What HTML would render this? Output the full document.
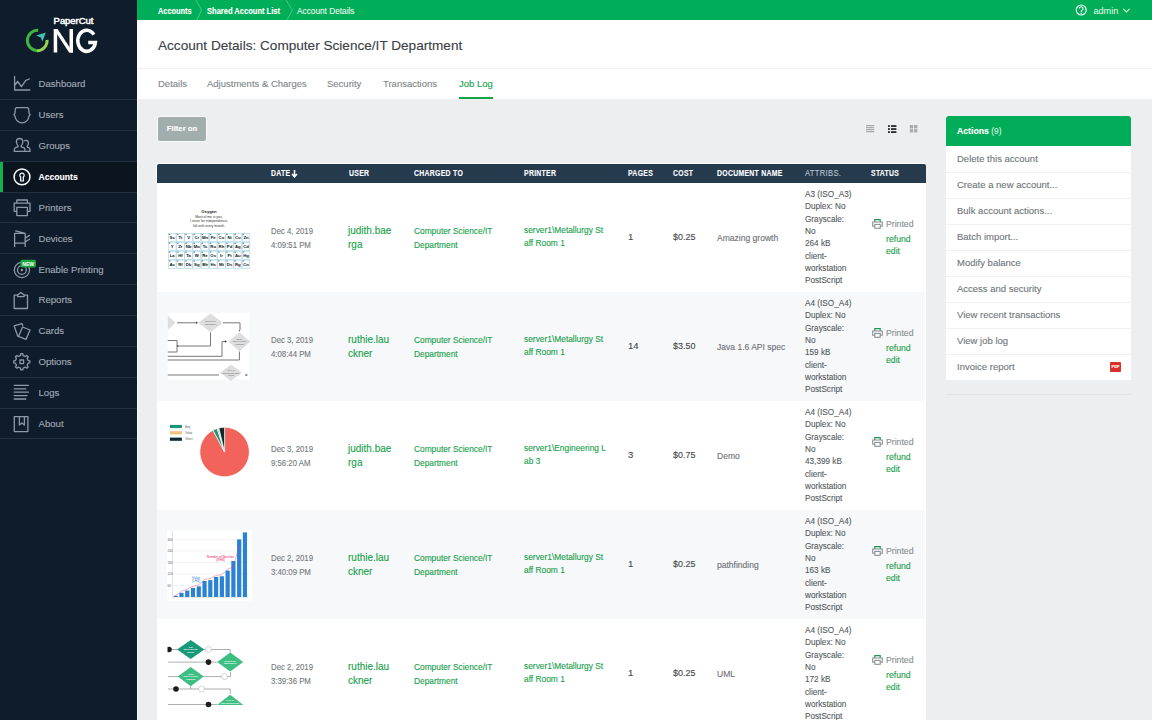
<!DOCTYPE html>
<html><head><meta charset="utf-8">
<style>
*{box-sizing:border-box;margin:0;padding:0}
html,body{width:1152px;height:720px;overflow:hidden}
body{position:relative;background:#eceef0;font-family:"Liberation Sans",sans-serif;color:#555;-webkit-text-stroke:0.12px currentColor}
#side{position:absolute;left:0;top:0;width:137px;height:720px;background:#0f1c2b}
#sedge{position:absolute;left:137px;top:0;width:1px;height:720px;background:#fafbfc}
.nt{position:absolute;left:38.5px;font-size:9.6px;color:#a1abb6;white-space:nowrap;line-height:12px}
.nt.act{color:#fff;font-weight:bold;font-size:8.6px}
.dv{position:absolute;left:0;width:137px;height:1px;background:#253040}
#actbg{position:absolute;left:0;top:162px;width:137px;height:30px;background:#0b1520}
#actbar{position:absolute;left:0;top:162px;width:3px;height:30px;background:#17b04f}
#side svg{position:absolute;overflow:visible}
#top{position:absolute;left:137px;top:0;width:1015px;height:20px;background:#00ad59}
.bc{position:absolute;top:5.9px;line-height:11px;font-size:8.4px;color:#fff;white-space:nowrap;transform:scaleX(0.88);transform-origin:0 0}
#hdr{position:absolute;left:137px;top:20px;width:1015px;height:79px;background:#fff}
#title{position:absolute;left:21px;top:17px;font-size:13.6px;color:#3b4146;white-space:nowrap;line-height:18px}
#hline{position:absolute;left:0;top:48px;width:1015px;height:1px;background:#eef0f1}
.tab{position:absolute;top:56px;font-size:9.5px;color:#80878b;white-space:nowrap;line-height:16px}
.tab.on{color:#16a34a}
#uline{position:absolute;left:322px;top:77px;width:34px;height:2px;background:#17a348}
#filter{position:absolute;left:157px;top:116px;width:50px;height:26px;border:1px solid #f7f9fa;border-radius:3px;background:#a2adad;color:#fff;font-size:7.7px;font-weight:bold;line-height:24px;text-align:center}
#tblbg{position:absolute;left:156px;top:163px;width:770px;height:21px;background:#fff;border-radius:3px}
#tbl{position:absolute;left:157px;top:164px;width:769px;height:600px;background:#fff}
#th{position:absolute;left:0;top:0;width:769px;height:19px;background:#263a4e;border-radius:2px 2px 0 0}
.h{position:absolute;top:0.4px;line-height:19px;font-size:8.2px;font-weight:bold;color:#fff;white-space:nowrap;letter-spacing:0.35px;transform:scaleX(0.84);transform-origin:0 0}
.row{position:absolute;left:0;width:768px;height:109px}
.row.alt{background:#f7f8fa}
.thumb{position:absolute;left:0;top:0;width:113px;height:109px}
.c{position:absolute;white-space:nowrap}
.date{font-size:8.5px;color:#74797d;line-height:14.1px;transform:scaleX(0.917);transform-origin:0 0}
.user{font-size:10px;color:#18a14b;line-height:14.5px}
.chg{font-size:8.35px;color:#18a14b;line-height:14px}
.prn{font-size:8.4px;color:#18a14b;line-height:12.8px}
.pg{font-size:9.5px;color:#43484c;line-height:12px}
.cost{font-size:9.5px;color:#43484c;line-height:12px;transform:scaleX(0.94);transform-origin:0 0}
.doc{font-size:8.8px;color:#6c7175;line-height:12px;transform:scaleX(0.97);transform-origin:0 0}
.att{font-size:9px;color:#555b60;line-height:12.3px;transform:scaleX(0.91);transform-origin:0 0}
.st{font-size:8.7px;line-height:12px}
.st.p{color:#888e92}
.st.l{color:#1a9f4c}
.pi{position:absolute}
#act{position:absolute;left:946px;top:116px;width:185px;height:264px;background:#fff;border-radius:3px 3px 0 0}
#acth{position:absolute;left:0;top:0;width:185px;height:30px;background:#01ad59;border-radius:3px 3px 0 0}
#acth .t{position:absolute;left:11px;top:9px;font-size:8.7px;font-weight:bold;color:#fff;line-height:12px;white-space:nowrap}
#acth .t span{font-weight:normal;color:#d8f3e0;font-size:8.3px}
.ai{position:absolute;left:11px;font-size:9.5px;color:#6f767b;white-space:nowrap;line-height:26px}
.ad{position:absolute;left:0;width:185px;height:1px;background:#f0f1f3}
.pdf{position:absolute;left:164px;top:246px;width:11px;height:10px;background:#d9302c;border-radius:1px;color:#fff;font-size:4px;font-weight:bold;line-height:10px;text-align:center}
#actfoot{position:absolute;left:946px;top:394px;width:185px;height:1px;background:#e2e4e6}

</style></head><body>
<div id="sedge"></div>
<div id="side">
<div id="actbg"></div><div id="actbar"></div><div class="dv" style="top:99px"></div><div class="dv" style="top:130px"></div><div class="dv" style="top:161px"></div><div class="dv" style="top:192px"></div><div class="dv" style="top:222px"></div><div class="dv" style="top:253px"></div><div class="dv" style="top:284px"></div><div class="dv" style="top:315px"></div><div class="dv" style="top:346px"></div><div class="dv" style="top:377px"></div><div class="dv" style="top:408px"></div><div class="dv" style="top:438px"></div>
<div class="nt" style="top:78.47px">Dashboard</div>
<div class="nt" style="top:109.32px">Users</div>
<div class="nt" style="top:140.17px">Groups</div>
<div class="nt act" style="top:171.37px">Accounts</div>
<div class="nt" style="top:201.87px">Printers</div>
<div class="nt" style="top:232.72px">Devices</div>
<div class="nt" style="top:263.57px">Enable Printing</div>
<div class="nt" style="top:294.42px">Reports</div>
<div class="nt" style="top:325.27px">Cards</div>
<div class="nt" style="top:356.12px">Options</div>
<div class="nt" style="top:386.97px">Logs</div>
<div class="nt" style="top:417.82px">About</div>












<svg width="137" height="720" style="left:0;top:0" viewBox="0 0 137 720">
<g fill="none" stroke="#8e99a5" stroke-width="1.3" stroke-linecap="round" stroke-linejoin="round">
 <!-- dashboard -->
 <path d="M14.6 76.5V90h15.2M14.6 85.5l3-4 3.8 5.2 4.4-6.4 3.6-1.3"/>
 <!-- users -->
 <path d="M16.3 107.7H27.7Q28.8 108.2 28.9 111L29.1 113.4 30.2 114.7 29 116.1Q28 122.4 22 122.8 16 122.4 15 116.1L13.8 114.7 14.9 113.4 15.1 111Q15.2 108.2 16.3 107.7Z"/>
 <!-- groups -->
 <path d="M14.3 151.4V149.6Q14.3 148 16.2 147.4L18 146.8V145.8Q16.4 144.6 16.4 141.8 16.4 138.5 19.6 138.5 22.8 138.5 22.8 141.8 22.8 144.6 21.2 145.8V146.8L23 147.4Q24.9 148 24.9 149.6V151.4Z"/>
 <path d="M24.3 140.8Q25 140.3 25.9 140.3 28.4 140.3 28.4 143 28.4 145.2 27.2 146.2V147L28.6 147.6Q30 148.2 30 149.6V151.4H25.6"/>
 <!-- printers -->
 <path d="M16.8 203.2v-3.2h10.6v3.2M16.8 211.3h-2.6v-8.1h15.8v8.1h-2.6M16.8 207.4h10.6v8.2h-10.6z"/>
 <!-- devices -->
 <path d="M15.6 230.8l9.6 2.6M14.6 233.4h10.6v9.8h-10.6zM14.6 243.2v3.2M25.2 243.2v3.2M25.4 238l4-2.6M25.4 241.8l4-2.6"/>
 <!-- enable printing -->
 <circle cx="21.9" cy="270" r="7.6"/><circle cx="21.9" cy="270" r="4.4"/>
 <!-- reports -->
 <path d="M17.6 295.2h-3.4v13.3h13.3v-13.3h-3.4M17.6 296.6h6.5v-1.6l-3.25-2.6-3.25 2.6z"/>
 <!-- cards -->
 <path d="M14.1 325.8l7.7-2.1 1 1.6M17.8 336.4l-3.7-10.6M18.4 336.4l4.2-9.4 7.4 3-4 9.4z"/>
 <!-- options -->
 <path d="M20.47 355.54 L20.83 353.76 L22.77 353.76 L23.13 355.54 L25.28 356.43 L26.80 355.43 L28.17 356.80 L27.17 358.32 L28.06 360.47 L29.84 360.83 L29.84 362.77 L28.06 363.13 L27.17 365.28 L28.17 366.80 L26.80 368.17 L25.28 367.17 L23.13 368.06 L22.77 369.84 L20.83 369.84 L20.47 368.06 L18.32 367.17 L16.80 368.17 L15.43 366.80 L16.43 365.28 L15.54 363.13 L13.76 362.77 L13.76 360.83 L15.54 360.47 L16.43 358.32 L15.43 356.80 L16.80 355.43 L18.32 356.43z"/>
 <rect x="20" y="360" width="3.6" height="3.6"/>
 <!-- logs -->
 <path d="M14.2 385.3h14.2M14.2 388.8h11.6M14.2 392.2h14.2M14.2 395.6h12.8M14.2 399h11.6"/>
 <!-- about -->
 <path d="M14.3 416.6h13.6v15h-13.6zM19.4 416.6v8.4l2.5-2 2.5 2v-8.4"/>
</g>
<g fill="none" stroke="#ffffff" stroke-width="1.5">
 <circle cx="22" cy="176.9" r="7.9"/>
</g>
<path d="M22 173.1a2.2 2.2 0 0 1 1.3 4v3.9h-2.6v-3.9a2.2 2.2 0 0 1 1.3-4z" fill="none" stroke="#fff" stroke-width="1.2"/>
<circle cx="21.9" cy="270" r="1.2" fill="#8e99a5"/>
<rect x="20.4" y="259.8" width="15.6" height="7.6" rx="1.6" fill="#1aa63a"/>
<text x="28.2" y="265.9" font-family="Liberation Sans" font-weight="bold" font-size="6" fill="#fff" text-anchor="middle" textLength="12" lengthAdjust="spacingAndGlyphs">NEW</text>
<!-- logo -->
<text x="53.6" y="24.4" font-family="Liberation Sans" font-size="8.4" stroke="#fff" stroke-width="0.45" style="-webkit-text-stroke:0" fill="#fff" textLength="39.8" lengthAdjust="spacingAndGlyphs">PaperCut</text>
<g fill="#fff"><rect x="53.7" y="29" width="3.5" height="23.5"/><rect x="69.5" y="29" width="3.5" height="23.5"/><path d="M53.7 29H57.6L73 52.5H69.1Z"/></g><path d="M93.85 34.6A8.85 10.55 0 1 0 95.4 42.4H88.2" fill="none" stroke="#fff" stroke-width="3.5"/>
<path d="M38.2 30.3A10.2 10.2 0 0 0 37 50.7" fill="none" stroke="#3fb53f" stroke-width="3"/>
<path d="M37 50.7A10.2 10.2 0 0 0 47.1 39.8" fill="none" stroke="#93d452" stroke-width="3"/>
<path d="M36.2 35.6L45.8 32.4 42.4 41.6 40.8 37.6z" fill="#3cc6b5"/>
</svg>
</div>
<div id="top">
  <div class="bc" style="left:20.6px;font-weight:bold">Accounts</div>
  <div class="bc" style="left:70.3px;font-weight:bold;transform:scaleX(0.9)">Shared Account List</div>
  <div class="bc" style="left:160px;font-size:8.8px;top:5.5px;color:#e3f6ea;transform:scaleX(0.94)">Account Details</div>
  <svg width="1015" height="20" style="position:absolute;left:0;top:0" viewBox="137 0 1015 20">
    <g fill="none" stroke="#5fcf8c" stroke-width="0.8"><path d="M195.8 0L201.6 10 196.8 20"/><path d="M286 0L292.3 10 287.1 20"/></g>
    <circle cx="1081.2" cy="10" r="5" fill="none" stroke="#eafbef" stroke-width="1.2"/>
    <path d="M1079.3 8.6a1.9 1.9 0 1 1 2.8 1.7q-.9.5-.9 1.4v.5" fill="none" stroke="#eafbef" stroke-width="1.1"/>
    <circle cx="1081.2" cy="13.4" r="0.65" fill="#eafbef"/>
    <path d="M1123.2 8.8l3.2 3.2 3.2-3.2" fill="none" stroke="#d5f3de" stroke-width="1.1"/>
  </svg>
  <div class="bc" style="left:956.5px;font-size:9.1px;top:5.5px;color:#d5f5de;transform:none">admin</div>
</div>
<div id="hdr">
  <div id="title">Account Details: Computer Science/IT Department</div>
  <div id="hline"></div>
  <div class="tab" style="left:21px">Details</div>
  <div class="tab" style="left:70px">Adjustments &amp; Charges</div>
  <div class="tab" style="left:190px">Security</div>
  <div class="tab" style="left:246px">Transactions</div>
  <div class="tab on" style="left:322px">Job Log</div>
  <div id="uline"></div>
</div>
<div id="filter">Filter on</div>
<svg width="60" height="12" style="position:absolute;left:862px;top:122px" viewBox="862 122 60 12">
  <g fill="#a9adb1"><rect x="866" y="125" width="8.2" height="1.3"/><rect x="866" y="127" width="8.2" height="1.3"/><rect x="866" y="129" width="8.2" height="1.3"/><rect x="866" y="131" width="8.2" height="1.3"/></g>
  <g fill="#1d1f22"><rect x="888" y="125.2" width="1.9" height="1.7"/><rect x="891" y="125.2" width="5.4" height="1.7"/><rect x="888" y="128.2" width="1.9" height="1.7"/><rect x="891" y="128.2" width="5.4" height="1.7"/><rect x="888" y="131.2" width="1.9" height="1.7"/><rect x="891" y="131.2" width="5.4" height="1.7"/></g>
  <g fill="#a9adb1"><rect x="909.8" y="125" width="3.4" height="3.4"/><rect x="914" y="125" width="3.4" height="3.4"/><rect x="909.8" y="129.1" width="3.4" height="3.4"/><rect x="914" y="129.1" width="3.4" height="3.4"/></g>
</svg>
<div id="tblbg"></div>
<div id="tbl">
  <div id="th">
    <div class="h" style="left:114px">DATE</div><svg style="position:absolute;left:134px;top:5px" width="7" height="9" viewBox="0 0 7 9"><path d="M3.5 1V7.5M1 5l2.5 2.7L6 5" fill="none" stroke="#fff" stroke-width="1.6"/></svg>
    <div class="h" style="left:192px">USER</div>
    <div class="h" style="left:257px">CHARGED TO</div>
    <div class="h" style="left:367px">PRINTER</div>
    <div class="h" style="left:471px">PAGES</div>
    <div class="h" style="left:516px">COST</div>
    <div class="h" style="left:560px">DOCUMENT NAME</div>
    <div class="h" style="left:648px;font-weight:normal;color:#b9c3cd;transform:scaleX(0.93)">ATTRIBS.</div>
    <div class="h" style="left:714px">STATUS</div>
  </div>
<div class="row" style="top:19px">
 <div class="thumb" style="top:0"><svg width="113" height="109" viewBox="157 183 113 109" style="position:absolute;left:0;top:0"><text x="209" y="213" font-family="Liberation Sans" font-weight="bold" font-size="4.2" text-anchor="middle" fill="#222">Oxygen</text><text x="209" y="217.8" font-family="Liberation Sans" font-size="3.4" text-anchor="middle" fill="#333">Most of me is you,</text><text x="209" y="222.3" font-family="Liberation Sans" font-size="3.4" text-anchor="middle" fill="#333">I strive for independence,</text><text x="209" y="226.8" font-family="Liberation Sans" font-size="3.4" text-anchor="middle" fill="#333">fall with every breath.</text><rect x="168.1" y="233.1" width="82.0" height="35.6" fill="#f4fafd"/><rect x="168.40" y="233.40" width="7.60" height="8.30" fill="#fff" stroke="#8fcde6" stroke-width="0.5"/><text x="172.20" y="239.10" font-family="Liberation Sans" font-weight="bold" font-size="4.3" text-anchor="middle" fill="#111">Sc</text><rect x="168.90" y="233.90" width="1.4" height="0.8" fill="#444"/><rect x="176.60" y="233.40" width="7.60" height="8.30" fill="#fff" stroke="#8fcde6" stroke-width="0.5"/><text x="180.40" y="239.10" font-family="Liberation Sans" font-weight="bold" font-size="4.3" text-anchor="middle" fill="#111">Ti</text><rect x="177.10" y="233.90" width="1.4" height="0.8" fill="#444"/><rect x="184.80" y="233.40" width="7.60" height="8.30" fill="#fff" stroke="#8fcde6" stroke-width="0.5"/><text x="188.60" y="239.10" font-family="Liberation Sans" font-weight="bold" font-size="4.3" text-anchor="middle" fill="#111">V</text><rect x="185.30" y="233.90" width="1.4" height="0.8" fill="#444"/><rect x="193.00" y="233.40" width="7.60" height="8.30" fill="#fff" stroke="#8fcde6" stroke-width="0.5"/><text x="196.80" y="239.10" font-family="Liberation Sans" font-weight="bold" font-size="4.3" text-anchor="middle" fill="#111">Cr</text><rect x="193.50" y="233.90" width="1.4" height="0.8" fill="#444"/><rect x="201.20" y="233.40" width="7.60" height="8.30" fill="#fff" stroke="#8fcde6" stroke-width="0.5"/><text x="205.00" y="239.10" font-family="Liberation Sans" font-weight="bold" font-size="4.3" text-anchor="middle" fill="#111">Mn</text><rect x="201.70" y="233.90" width="1.4" height="0.8" fill="#444"/><rect x="209.40" y="233.40" width="7.60" height="8.30" fill="#fff" stroke="#8fcde6" stroke-width="0.5"/><text x="213.20" y="239.10" font-family="Liberation Sans" font-weight="bold" font-size="4.3" text-anchor="middle" fill="#111">Fe</text><rect x="209.90" y="233.90" width="1.4" height="0.8" fill="#444"/><rect x="217.60" y="233.40" width="7.60" height="8.30" fill="#fff" stroke="#8fcde6" stroke-width="0.5"/><text x="221.40" y="239.10" font-family="Liberation Sans" font-weight="bold" font-size="4.3" text-anchor="middle" fill="#111">Co</text><rect x="218.10" y="233.90" width="1.4" height="0.8" fill="#444"/><rect x="225.80" y="233.40" width="7.60" height="8.30" fill="#fff" stroke="#8fcde6" stroke-width="0.5"/><text x="229.60" y="239.10" font-family="Liberation Sans" font-weight="bold" font-size="4.3" text-anchor="middle" fill="#111">Ni</text><rect x="226.30" y="233.90" width="1.4" height="0.8" fill="#444"/><rect x="234.00" y="233.40" width="7.60" height="8.30" fill="#fff" stroke="#8fcde6" stroke-width="0.5"/><text x="237.80" y="239.10" font-family="Liberation Sans" font-weight="bold" font-size="4.3" text-anchor="middle" fill="#111">Cu</text><rect x="234.50" y="233.90" width="1.4" height="0.8" fill="#444"/><rect x="242.20" y="233.40" width="7.60" height="8.30" fill="#fff" stroke="#8fcde6" stroke-width="0.5"/><text x="246.00" y="239.10" font-family="Liberation Sans" font-weight="bold" font-size="4.3" text-anchor="middle" fill="#111">Zn</text><rect x="242.70" y="233.90" width="1.4" height="0.8" fill="#444"/><rect x="168.40" y="242.30" width="7.60" height="8.30" fill="#fff" stroke="#8fcde6" stroke-width="0.5"/><text x="172.20" y="248.00" font-family="Liberation Sans" font-weight="bold" font-size="4.3" text-anchor="middle" fill="#111">Y</text><rect x="168.90" y="242.80" width="1.4" height="0.8" fill="#444"/><rect x="176.60" y="242.30" width="7.60" height="8.30" fill="#fff" stroke="#8fcde6" stroke-width="0.5"/><text x="180.40" y="248.00" font-family="Liberation Sans" font-weight="bold" font-size="4.3" text-anchor="middle" fill="#111">Zr</text><rect x="177.10" y="242.80" width="1.4" height="0.8" fill="#444"/><rect x="184.80" y="242.30" width="7.60" height="8.30" fill="#fff" stroke="#8fcde6" stroke-width="0.5"/><text x="188.60" y="248.00" font-family="Liberation Sans" font-weight="bold" font-size="4.3" text-anchor="middle" fill="#111">Nb</text><rect x="185.30" y="242.80" width="1.4" height="0.8" fill="#444"/><rect x="193.00" y="242.30" width="7.60" height="8.30" fill="#fff" stroke="#8fcde6" stroke-width="0.5"/><text x="196.80" y="248.00" font-family="Liberation Sans" font-weight="bold" font-size="4.3" text-anchor="middle" fill="#111">Mo</text><rect x="193.50" y="242.80" width="1.4" height="0.8" fill="#444"/><rect x="201.20" y="242.30" width="7.60" height="8.30" fill="#fff" stroke="#8fcde6" stroke-width="0.5"/><text x="205.00" y="248.00" font-family="Liberation Sans" font-weight="bold" font-size="4.3" text-anchor="middle" fill="#111">Tc</text><rect x="201.70" y="242.80" width="1.4" height="0.8" fill="#444"/><rect x="209.40" y="242.30" width="7.60" height="8.30" fill="#fff" stroke="#8fcde6" stroke-width="0.5"/><text x="213.20" y="248.00" font-family="Liberation Sans" font-weight="bold" font-size="4.3" text-anchor="middle" fill="#111">Ru</text><rect x="209.90" y="242.80" width="1.4" height="0.8" fill="#444"/><rect x="217.60" y="242.30" width="7.60" height="8.30" fill="#fff" stroke="#8fcde6" stroke-width="0.5"/><text x="221.40" y="248.00" font-family="Liberation Sans" font-weight="bold" font-size="4.3" text-anchor="middle" fill="#111">Rh</text><rect x="218.10" y="242.80" width="1.4" height="0.8" fill="#444"/><rect x="225.80" y="242.30" width="7.60" height="8.30" fill="#fff" stroke="#8fcde6" stroke-width="0.5"/><text x="229.60" y="248.00" font-family="Liberation Sans" font-weight="bold" font-size="4.3" text-anchor="middle" fill="#111">Pd</text><rect x="226.30" y="242.80" width="1.4" height="0.8" fill="#444"/><rect x="234.00" y="242.30" width="7.60" height="8.30" fill="#fff" stroke="#8fcde6" stroke-width="0.5"/><text x="237.80" y="248.00" font-family="Liberation Sans" font-weight="bold" font-size="4.3" text-anchor="middle" fill="#111">Ag</text><rect x="234.50" y="242.80" width="1.4" height="0.8" fill="#444"/><rect x="242.20" y="242.30" width="7.60" height="8.30" fill="#fff" stroke="#8fcde6" stroke-width="0.5"/><text x="246.00" y="248.00" font-family="Liberation Sans" font-weight="bold" font-size="4.3" text-anchor="middle" fill="#111">Cd</text><rect x="242.70" y="242.80" width="1.4" height="0.8" fill="#444"/><rect x="168.40" y="251.20" width="7.60" height="8.30" fill="#fff" stroke="#8fcde6" stroke-width="0.5"/><text x="172.20" y="256.90" font-family="Liberation Sans" font-weight="bold" font-size="4.3" text-anchor="middle" fill="#111">La</text><rect x="168.90" y="251.70" width="1.4" height="0.8" fill="#444"/><rect x="176.60" y="251.20" width="7.60" height="8.30" fill="#fff" stroke="#8fcde6" stroke-width="0.5"/><text x="180.40" y="256.90" font-family="Liberation Sans" font-weight="bold" font-size="4.3" text-anchor="middle" fill="#111">Hf</text><rect x="177.10" y="251.70" width="1.4" height="0.8" fill="#444"/><rect x="184.80" y="251.20" width="7.60" height="8.30" fill="#fff" stroke="#8fcde6" stroke-width="0.5"/><text x="188.60" y="256.90" font-family="Liberation Sans" font-weight="bold" font-size="4.3" text-anchor="middle" fill="#111">Ta</text><rect x="185.30" y="251.70" width="1.4" height="0.8" fill="#444"/><rect x="193.00" y="251.20" width="7.60" height="8.30" fill="#fff" stroke="#8fcde6" stroke-width="0.5"/><text x="196.80" y="256.90" font-family="Liberation Sans" font-weight="bold" font-size="4.3" text-anchor="middle" fill="#111">W</text><rect x="193.50" y="251.70" width="1.4" height="0.8" fill="#444"/><rect x="201.20" y="251.20" width="7.60" height="8.30" fill="#fff" stroke="#8fcde6" stroke-width="0.5"/><text x="205.00" y="256.90" font-family="Liberation Sans" font-weight="bold" font-size="4.3" text-anchor="middle" fill="#111">Re</text><rect x="201.70" y="251.70" width="1.4" height="0.8" fill="#444"/><rect x="209.40" y="251.20" width="7.60" height="8.30" fill="#fff" stroke="#8fcde6" stroke-width="0.5"/><text x="213.20" y="256.90" font-family="Liberation Sans" font-weight="bold" font-size="4.3" text-anchor="middle" fill="#111">Os</text><rect x="209.90" y="251.70" width="1.4" height="0.8" fill="#444"/><rect x="217.60" y="251.20" width="7.60" height="8.30" fill="#fff" stroke="#8fcde6" stroke-width="0.5"/><text x="221.40" y="256.90" font-family="Liberation Sans" font-weight="bold" font-size="4.3" text-anchor="middle" fill="#111">Ir</text><rect x="218.10" y="251.70" width="1.4" height="0.8" fill="#444"/><rect x="225.80" y="251.20" width="7.60" height="8.30" fill="#fff" stroke="#8fcde6" stroke-width="0.5"/><text x="229.60" y="256.90" font-family="Liberation Sans" font-weight="bold" font-size="4.3" text-anchor="middle" fill="#111">Pt</text><rect x="226.30" y="251.70" width="1.4" height="0.8" fill="#444"/><rect x="234.00" y="251.20" width="7.60" height="8.30" fill="#fff" stroke="#8fcde6" stroke-width="0.5"/><text x="237.80" y="256.90" font-family="Liberation Sans" font-weight="bold" font-size="4.3" text-anchor="middle" fill="#111">Au</text><rect x="234.50" y="251.70" width="1.4" height="0.8" fill="#444"/><rect x="242.20" y="251.20" width="7.60" height="8.30" fill="#fff" stroke="#8fcde6" stroke-width="0.5"/><text x="246.00" y="256.90" font-family="Liberation Sans" font-weight="bold" font-size="4.3" text-anchor="middle" fill="#111">Hg</text><rect x="242.70" y="251.70" width="1.4" height="0.8" fill="#444"/><rect x="168.40" y="260.10" width="7.60" height="8.30" fill="#fff" stroke="#8fcde6" stroke-width="0.5"/><text x="172.20" y="265.80" font-family="Liberation Sans" font-weight="bold" font-size="4.3" text-anchor="middle" fill="#111">Ac</text><rect x="168.90" y="260.60" width="1.4" height="0.8" fill="#444"/><rect x="176.60" y="260.10" width="7.60" height="8.30" fill="#fff" stroke="#8fcde6" stroke-width="0.5"/><text x="180.40" y="265.80" font-family="Liberation Sans" font-weight="bold" font-size="4.3" text-anchor="middle" fill="#111">Rf</text><rect x="177.10" y="260.60" width="1.4" height="0.8" fill="#444"/><rect x="184.80" y="260.10" width="7.60" height="8.30" fill="#fff" stroke="#8fcde6" stroke-width="0.5"/><text x="188.60" y="265.80" font-family="Liberation Sans" font-weight="bold" font-size="4.3" text-anchor="middle" fill="#111">Db</text><rect x="185.30" y="260.60" width="1.4" height="0.8" fill="#444"/><rect x="193.00" y="260.10" width="7.60" height="8.30" fill="#fff" stroke="#8fcde6" stroke-width="0.5"/><text x="196.80" y="265.80" font-family="Liberation Sans" font-weight="bold" font-size="4.3" text-anchor="middle" fill="#111">Sg</text><rect x="193.50" y="260.60" width="1.4" height="0.8" fill="#444"/><rect x="201.20" y="260.10" width="7.60" height="8.30" fill="#fff" stroke="#8fcde6" stroke-width="0.5"/><text x="205.00" y="265.80" font-family="Liberation Sans" font-weight="bold" font-size="4.3" text-anchor="middle" fill="#111">Bh</text><rect x="201.70" y="260.60" width="1.4" height="0.8" fill="#444"/><rect x="209.40" y="260.10" width="7.60" height="8.30" fill="#fff" stroke="#8fcde6" stroke-width="0.5"/><text x="213.20" y="265.80" font-family="Liberation Sans" font-weight="bold" font-size="4.3" text-anchor="middle" fill="#111">Hs</text><rect x="209.90" y="260.60" width="1.4" height="0.8" fill="#444"/><rect x="217.60" y="260.10" width="7.60" height="8.30" fill="#fff" stroke="#8fcde6" stroke-width="0.5"/><text x="221.40" y="265.80" font-family="Liberation Sans" font-weight="bold" font-size="4.3" text-anchor="middle" fill="#111">Mt</text><rect x="218.10" y="260.60" width="1.4" height="0.8" fill="#444"/><rect x="225.80" y="260.10" width="7.60" height="8.30" fill="#fff" stroke="#8fcde6" stroke-width="0.5"/><text x="229.60" y="265.80" font-family="Liberation Sans" font-weight="bold" font-size="4.3" text-anchor="middle" fill="#111">Ds</text><rect x="226.30" y="260.60" width="1.4" height="0.8" fill="#444"/><rect x="234.00" y="260.10" width="7.60" height="8.30" fill="#fff" stroke="#8fcde6" stroke-width="0.5"/><text x="237.80" y="265.80" font-family="Liberation Sans" font-weight="bold" font-size="4.3" text-anchor="middle" fill="#111">Rg</text><rect x="234.50" y="260.60" width="1.4" height="0.8" fill="#444"/><rect x="242.20" y="260.10" width="7.60" height="8.30" fill="#fff" stroke="#8fcde6" stroke-width="0.5"/><text x="246.00" y="265.80" font-family="Liberation Sans" font-weight="bold" font-size="4.3" text-anchor="middle" fill="#111">Cn</text><rect x="242.70" y="260.60" width="1.4" height="0.8" fill="#444"/></svg></div>
 <div class="c date" style="left:114px;top:40.7px">Dec 4, 2019<br>4:09:51 PM</div>
 <div class="c user" style="left:191px;top:40.6px">judith.bae<br>rga</div>
 <div class="c chg" style="left:257px;top:40.9px">Computer Science/IT<br>Department</div>
 <div class="c prn" style="left:367px;top:40.9px">server1&#92;Metallurgy St<br>aff Room 1</div>
 <div class="c pg" style="left:471px;top:48.4px">1</div>
 <div class="c cost" style="left:516px;top:48.4px">$0.25</div>
 <div class="c doc" style="left:560px;top:49.0px">Amazing growth</div>
 <div class="c att" style="left:648px;top:5.1px">A3 (ISO_A3)<br>Duplex: No<br>Grayscale:<br>No<br>264 kB<br>client-<br>workstation<br>PostScript</div>
 <svg class="pi" style="left:715px;top:36.2px" width="11" height="10" viewBox="0 0 11 10"><path d="M2.8 3V0.7h5.4V3" fill="none" stroke="#23935a" stroke-width="1.2"/><path d="M2.8 7.3H0.7V3h9.6v4.3H8.2" fill="none" stroke="#8a9094" stroke-width="1.1"/><rect x="2.8" y="5.4" width="5.4" height="3.9" fill="none" stroke="#8a9094" stroke-width="1.1"/></svg>
 <div class="c st p" style="left:729px;top:34.7px">Printed</div>
 <div class="c st l" style="left:729px;top:49.5px">refund</div>
 <div class="c st l" style="left:729px;top:61.6px">edit</div>
</div>
<div class="row alt" style="top:128px">
 <div class="thumb" style="top:0"><svg width="113" height="109" viewBox="157 292 113 109" style="position:absolute;left:0;top:0"><rect x="167.8" y="312.8" width="81.6" height="66.6" fill="#fff"/><path d="M167.8 315.5L175.5 322.8L167.8 330z" fill="#dedede"/><path d="M198.3 322.8L210.5 313.40000000000003L222.7 322.8L210.5 332.2z" fill="#dedede"/><path d="M228.4 341.7L239.4 332.2L250.4 341.7L239.4 351.2z" fill="#dedede"/><path d="M220 372.8L231 364.5L242 372.8L231 381.1z" fill="#dedede"/><g fill="none" stroke="#777" stroke-width="1"><path d="M177 322.8H196"/><path d="M223 322.8H240V330"/><path d="M210.5 332.5V346H178"/><path d="M167.8 340.5H177V352H167.8"/><path d="M167.8 356.3H222V341.5H225"/><path d="M167.8 360H239.4V351.5"/><path d="M167.8 375H219"/></g><g fill="#444"><path d="M196 321.6L198 322.8L196 324z"/><path d="M238.8 330L239.4 332 240 330z"/><path d="M177 345L179 346 177 347z"/><path d="M225 340.3L227 341.5 225 342.7z"/><path d="M245.5 374L248 375 245.5 376z"/></g><g font-family="Liberation Sans" font-size="10" fill="#555" text-anchor="middle"><text transform="translate(210.5 322) scale(0.22000000000000003)">Need to be</text><text transform="translate(210.5 324.6) scale(0.22000000000000003)">impressive?</text><text transform="translate(239.4 339.5) scale(0.22000000000000003)">Clear</text><text transform="translate(239.4 342) scale(0.22000000000000003)">where to start</text><text transform="translate(239.4 344.5) scale(0.22000000000000003)">reading?</text><text transform="translate(231 371) scale(0.22000000000000003)">Free of</text><text transform="translate(231 373.5) scale(0.22000000000000003)">spelling and logic</text><text transform="translate(231 376) scale(0.22000000000000003)">errors</text></g></svg></div>
 <div class="c date" style="left:114px;top:40.7px">Dec 3, 2019<br>4:08:44 PM</div>
 <div class="c user" style="left:191px;top:40.6px">ruthie.lau<br>ckner</div>
 <div class="c chg" style="left:257px;top:40.9px">Computer Science/IT<br>Department</div>
 <div class="c prn" style="left:367px;top:40.9px">server1&#92;Metallurgy St<br>aff Room 1</div>
 <div class="c pg" style="left:471px;top:48.4px">14</div>
 <div class="c cost" style="left:516px;top:48.4px">$3.50</div>
 <div class="c doc" style="left:560px;top:49.0px">Java 1.6 API spec</div>
 <div class="c att" style="left:648px;top:5.1px">A4 (ISO_A4)<br>Duplex: No<br>Grayscale:<br>No<br>159 kB<br>client-<br>workstation<br>PostScript</div>
 <svg class="pi" style="left:715px;top:36.2px" width="11" height="10" viewBox="0 0 11 10"><path d="M2.8 3V0.7h5.4V3" fill="none" stroke="#23935a" stroke-width="1.2"/><path d="M2.8 7.3H0.7V3h9.6v4.3H8.2" fill="none" stroke="#8a9094" stroke-width="1.1"/><rect x="2.8" y="5.4" width="5.4" height="3.9" fill="none" stroke="#8a9094" stroke-width="1.1"/></svg>
 <div class="c st p" style="left:729px;top:34.7px">Printed</div>
 <div class="c st l" style="left:729px;top:49.5px">refund</div>
 <div class="c st l" style="left:729px;top:61.6px">edit</div>
</div>
<div class="row" style="top:237px">
 <div class="thumb" style="top:0"><svg width="113" height="109" viewBox="157 401 113 109" style="position:absolute;left:0;top:0"><path d="M224.6 452L224.60 427.30A24.7 24.7 0 1 1 213.00 430.19z" fill="#f2635b" stroke="#fff" stroke-width="0.7"/><path d="M224.6 452L213.00 430.19A24.7 24.7 0 0 1 217.17 428.44z" fill="#16977a" stroke="#fff" stroke-width="0.7"/><path d="M224.6 452L217.17 428.44A24.7 24.7 0 0 1 218.83 427.98z" fill="#f4c27e" stroke="#fff" stroke-width="0.7"/><path d="M224.6 452L218.83 427.98A24.7 24.7 0 0 1 224.60 427.30z" fill="#0e2a33" stroke="#fff" stroke-width="0.7"/><rect x="169.9" y="424.9" width="12" height="3.2" fill="#16977a"/><rect x="169.9" y="431.2" width="12" height="3.2" fill="#f4c27e"/><rect x="169.9" y="437.6" width="12" height="3.2" fill="#0e2a33"/><g font-family="Liberation Sans" font-size="10" fill="#555"><text transform="translate(185 427.6) scale(0.26)">Bing</text><text transform="translate(185 434) scale(0.26)">Yahoo</text><text transform="translate(185 440.3) scale(0.26)">Others</text></g></svg></div>
 <div class="c date" style="left:114px;top:40.7px">Dec 3, 2019<br>9:56:20 AM</div>
 <div class="c user" style="left:191px;top:40.6px">judith.bae<br>rga</div>
 <div class="c chg" style="left:257px;top:40.9px">Computer Science/IT<br>Department</div>
 <div class="c prn" style="left:367px;top:40.9px">server1&#92;Engineering L<br>ab 3</div>
 <div class="c pg" style="left:471px;top:48.4px">3</div>
 <div class="c cost" style="left:516px;top:48.4px">$0.75</div>
 <div class="c doc" style="left:560px;top:49.0px">Demo</div>
 <div class="c att" style="left:648px;top:5.1px">A4 (ISO_A4)<br>Duplex: No<br>Grayscale:<br>No<br>43,399 kB<br>client-<br>workstation<br>PostScript</div>
 <svg class="pi" style="left:715px;top:36.2px" width="11" height="10" viewBox="0 0 11 10"><path d="M2.8 3V0.7h5.4V3" fill="none" stroke="#23935a" stroke-width="1.2"/><path d="M2.8 7.3H0.7V3h9.6v4.3H8.2" fill="none" stroke="#8a9094" stroke-width="1.1"/><rect x="2.8" y="5.4" width="5.4" height="3.9" fill="none" stroke="#8a9094" stroke-width="1.1"/></svg>
 <div class="c st p" style="left:729px;top:34.7px">Printed</div>
 <div class="c st l" style="left:729px;top:49.5px">refund</div>
 <div class="c st l" style="left:729px;top:61.6px">edit</div>
</div>
<div class="row alt" style="top:346px">
 <div class="thumb" style="top:0"><svg width="113" height="109" viewBox="157 510 113 109" style="position:absolute;left:0;top:0"><rect x="167" y="530.5" width="85" height="70" fill="#fff"/><g stroke="#e6e6e6" stroke-width="0.5"><path d="M173 539.7H249"/><path d="M173 551H249"/><path d="M173 562.5H249"/><path d="M173 574H249"/><path d="M173 585.5H249"/></g><path d="M172.5 531V597.3H249" fill="none" stroke="#bbb" stroke-width="0.4"/><rect x="173.60" y="595.8" width="4.2" height="1.20" fill="#2a82d4"/><rect x="179.37" y="592.8" width="4.2" height="4.20" fill="#2a82d4"/><rect x="185.14" y="590.5" width="4.2" height="6.50" fill="#2a82d4"/><rect x="190.91" y="587.9" width="4.2" height="9.10" fill="#2a82d4"/><rect x="196.68" y="586.3" width="4.2" height="10.70" fill="#2a82d4"/><rect x="202.45" y="581" width="4.2" height="16.00" fill="#2a82d4"/><rect x="208.22" y="580.1" width="4.2" height="16.90" fill="#2a82d4"/><rect x="213.99" y="576.9" width="4.2" height="20.10" fill="#2a82d4"/><rect x="219.76" y="576.3" width="4.2" height="20.70" fill="#2a82d4"/><rect x="225.53" y="570.6" width="4.2" height="26.40" fill="#2a82d4"/><rect x="231.30" y="561" width="4.2" height="36.00" fill="#2a82d4"/><rect x="237.07" y="539.4" width="4.2" height="57.60" fill="#2a82d4"/><rect x="242.84" y="532.4" width="4.2" height="64.60" fill="#2a82d4"/><polyline points="173.6,597.0 181.5,591.3 187.2,589.0 193.0,586.4 198.8,584.8 204.5,579.5 210.3,578.6 216.1,575.4 221.9,574.8 227.6,569.1 233.4,567.0 239.2,545.4" fill="none" stroke="#e8307a" stroke-width="0.4"/><text transform="translate(167.6 540.7) scale(0.3)" font-size="10" font-family="Liberation Sans" fill="#555" text-anchor="start">300</text><text transform="translate(167.6 552) scale(0.3)" font-size="10" font-family="Liberation Sans" fill="#555" text-anchor="start">240</text><text transform="translate(167.6 563.5) scale(0.3)" font-size="10" font-family="Liberation Sans" fill="#555" text-anchor="start">180</text><text transform="translate(167.6 575) scale(0.3)" font-size="10" font-family="Liberation Sans" fill="#555" text-anchor="start">120</text><text transform="translate(167.6 586.5) scale(0.3)" font-size="10" font-family="Liberation Sans" fill="#555" text-anchor="start">60</text><text transform="translate(220.5 557.5) scale(0.32)" font-size="10" font-family="Liberation Sans" fill="#e0206a" text-anchor="middle">Number of Batches</text><text transform="translate(220.5 561) scale(0.32)" font-size="10" font-family="Liberation Sans" fill="#e0206a" text-anchor="middle">(RHS)</text><text transform="translate(196 578.5) scale(0.32)" font-size="10" font-family="Liberation Sans" fill="#2a7fd0" text-anchor="middle">Value</text><text transform="translate(196 582) scale(0.32)" font-size="10" font-family="Liberation Sans" fill="#2a7fd0" text-anchor="middle">(LHS)</text></svg></div>
 <div class="c date" style="left:114px;top:40.7px">Dec 2, 2019<br>3:40:09 PM</div>
 <div class="c user" style="left:191px;top:40.6px">ruthie.lau<br>ckner</div>
 <div class="c chg" style="left:257px;top:40.9px">Computer Science/IT<br>Department</div>
 <div class="c prn" style="left:367px;top:40.9px">server1&#92;Metallurgy St<br>aff Room 1</div>
 <div class="c pg" style="left:471px;top:48.4px">1</div>
 <div class="c cost" style="left:516px;top:48.4px">$0.25</div>
 <div class="c doc" style="left:560px;top:49.0px">pathfinding</div>
 <div class="c att" style="left:648px;top:5.1px">A4 (ISO_A4)<br>Duplex: No<br>Grayscale:<br>No<br>163 kB<br>client-<br>workstation<br>PostScript</div>
 <svg class="pi" style="left:715px;top:36.2px" width="11" height="10" viewBox="0 0 11 10"><path d="M2.8 3V0.7h5.4V3" fill="none" stroke="#23935a" stroke-width="1.2"/><path d="M2.8 7.3H0.7V3h9.6v4.3H8.2" fill="none" stroke="#8a9094" stroke-width="1.1"/><rect x="2.8" y="5.4" width="5.4" height="3.9" fill="none" stroke="#8a9094" stroke-width="1.1"/></svg>
 <div class="c st p" style="left:729px;top:34.7px">Printed</div>
 <div class="c st l" style="left:729px;top:49.5px">refund</div>
 <div class="c st l" style="left:729px;top:61.6px">edit</div>
</div>
<div class="row" style="top:455px">
 <div class="thumb" style="top:0"><svg width="113" height="109" viewBox="157 619 113 109" style="position:absolute;left:0;top:0"><defs><clipPath id="c5"><rect x="167.5" y="630" width="90" height="85"/></clipPath></defs><g clip-path="url(#c5)"><g fill="none" stroke="#777" stroke-width="0.6"><path d="M172 649.5H230.2V652.5"/><path d="M168 662.1H217"/><path d="M168 676.6H178"/><path d="M203 676.6H230.5V672"/><path d="M168 689H230.2V694"/><path d="M168 704.5H217"/><path d="M190.7 686V689"/></g><path d="M177.1 649.5L190.7 640.0L204.29999999999998 649.5L190.7 659.0z" fill="#17997a"/><path d="M217.2 662.1L230.2 652.6L243.2 662.1L230.2 671.6z" fill="#3dbf84"/><path d="M177.7 676.6L190.7 667.0L203.7 676.6L190.7 686.2z" fill="#3dbf84"/><path d="M217 705L230.2 694.7L243.4 705z" fill="#3dbf84"/><g fill="#1c1c1c"><circle cx="169" cy="649.5" r="2.8"/><circle cx="208.5" cy="662.1" r="2.8"/><circle cx="176" cy="689" r="2.8"/><circle cx="208.5" cy="704.5" r="2.8"/></g><g fill="#fff" stroke="#999" stroke-width="0.4"><circle cx="208.3" cy="649.5" r="3"/><circle cx="224.4" cy="676.6" r="3"/><circle cx="201.6" cy="689" r="3"/></g><g font-family="Liberation Sans" font-size="10" fill="#fff" text-anchor="middle" font-weight="bold"><text transform="translate(190.7 647.5) scale(0.22000000000000003)">Got</text><text transform="translate(190.7 650.3) scale(0.22000000000000003)">where are the</text><text transform="translate(190.7 653) scale(0.22000000000000003)">when?</text><text transform="translate(230.2 661.5) scale(0.22000000000000003)">Need to be</text><text transform="translate(230.2 664.2) scale(0.22000000000000003)">impressive?</text><text transform="translate(190.7 674.5) scale(0.22000000000000003)">Clear</text><text transform="translate(190.7 677.2) scale(0.22000000000000003)">where to start</text><text transform="translate(190.7 680) scale(0.22000000000000003)">reading?</text><text transform="translate(230.2 701) scale(0.22000000000000003)">Free of</text><text transform="translate(230.2 703.7) scale(0.22000000000000003)">spelling and logic</text></g></g></svg></div>
 <div class="c date" style="left:114px;top:40.7px">Dec 2, 2019<br>3:39:36 PM</div>
 <div class="c user" style="left:191px;top:40.6px">ruthie.lau<br>ckner</div>
 <div class="c chg" style="left:257px;top:40.9px">Computer Science/IT<br>Department</div>
 <div class="c prn" style="left:367px;top:40.9px">server1&#92;Metallurgy St<br>aff Room 1</div>
 <div class="c pg" style="left:471px;top:48.4px">1</div>
 <div class="c cost" style="left:516px;top:48.4px">$0.25</div>
 <div class="c doc" style="left:560px;top:49.0px">UML</div>
 <div class="c att" style="left:648px;top:5.1px">A4 (ISO_A4)<br>Duplex: No<br>Grayscale:<br>No<br>172 kB<br>client-<br>workstation<br>PostScript</div>
 <svg class="pi" style="left:715px;top:36.2px" width="11" height="10" viewBox="0 0 11 10"><path d="M2.8 3V0.7h5.4V3" fill="none" stroke="#23935a" stroke-width="1.2"/><path d="M2.8 7.3H0.7V3h9.6v4.3H8.2" fill="none" stroke="#8a9094" stroke-width="1.1"/><rect x="2.8" y="5.4" width="5.4" height="3.9" fill="none" stroke="#8a9094" stroke-width="1.1"/></svg>
 <div class="c st p" style="left:729px;top:34.7px">Printed</div>
 <div class="c st l" style="left:729px;top:49.5px">refund</div>
 <div class="c st l" style="left:729px;top:61.6px">edit</div>
</div>
</div>
<div id="act">
  <div id="acth"><div class="t">Actions <span>(9)</span></div></div>
<div class="ai" style="top:30px">Delete this account</div>
<div class="ai" style="top:56px">Create a new account...</div>
<div class="ad" style="top:56px"></div>
<div class="ai" style="top:82px">Bulk account actions...</div>
<div class="ad" style="top:82px"></div>
<div class="ai" style="top:108px">Batch import...</div>
<div class="ad" style="top:108px"></div>
<div class="ai" style="top:134px">Modify balance</div>
<div class="ad" style="top:134px"></div>
<div class="ai" style="top:160px">Access and security</div>
<div class="ad" style="top:160px"></div>
<div class="ai" style="top:186px">View recent transactions</div>
<div class="ad" style="top:186px"></div>
<div class="ai" style="top:212px">View job log</div>
<div class="ad" style="top:212px"></div>
<div class="ai" style="top:238px">Invoice report</div>
<div class="ad" style="top:238px"></div>
<div class="pdf"><span>PDF</span></div>
</div>
<div id="actfoot"></div>

</body></html>
